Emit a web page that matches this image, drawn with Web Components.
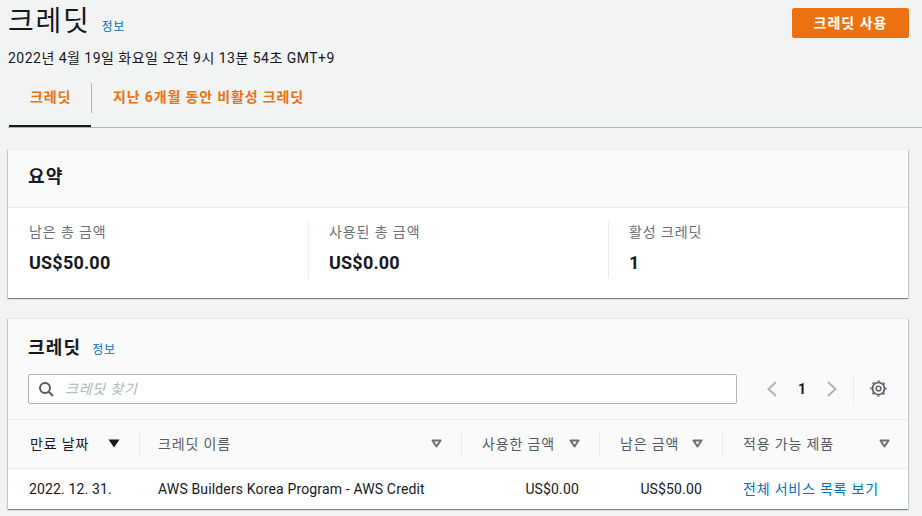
<!DOCTYPE html>
<html lang="ko">
<head>
<meta charset="utf-8">
<title>크레딧</title>
<style>
  html, body { margin: 0; height: 516px; overflow: hidden; }
  body {
    background: #f2f3f3;
    color: #16191f;
    font-family: Roboto, "Noto Sans CJK KR", sans-serif;
    font-size: 14px;
  }
</style>
</head>
<body>
<credits-page></credits-page>
<script>
const FONT = 'Roboto, "Noto Sans CJK KR", sans-serif';

class InfoLink extends HTMLElement {
    constructor() {
        super();
        this.attachShadow({ mode: 'open' });
        this.shadowRoot.innerHTML = `
            <style>
                :host { display: inline-block; font-size: 12px; line-height: 16px; color: #0073bb; letter-spacing: .7px; }
            </style>
            <slot></slot>
        `;
    }
}

class PageHeader extends HTMLElement {
    constructor() {
        super();
        this.attachShadow({ mode: 'open' });
        this.shadowRoot.innerHTML = `
            <style>
                :host { display: block; padding: 0 13px 0 8px; }
                .top { display: flex; justify-content: space-between; align-items: flex-start; height: 44px; }
                .title { display: flex; align-items: baseline; gap: 11px; padding-top: 2px; }
                h1 { margin: 0; font-size: 28px; line-height: 40px; font-weight: 400; letter-spacing: 1.7px; }
                button {
                    margin: 8px 0 0;
                    width: 117px;
                    height: 30px;
                    background: #ec7211;
                    border: 1px solid #ec7211;
                    border-radius: 2px;
                    color: #fff;
                    font: 700 14px/20px ${FONT};
                    letter-spacing: 1px;
                    padding: 0;
                }
                .date { margin-top: 4px; font-size: 14px; line-height: 20px; color: #16191f; letter-spacing: .48px; }
            </style>
            <div class="top">
                <div class="title"><h1>크레딧</h1><info-link>정보</info-link></div>
                <button>크레딧 사용</button>
            </div>
            <div class="date">2022년 4월 19일 화요일 오전 9시 13분 54초 GMT+9</div>
        `;
    }
}

class TabBar extends HTMLElement {
    constructor() {
        super();
        this.attachShadow({ mode: 'open' });
        this.shadowRoot.innerHTML = `
            <style>
                :host { display: block; margin: 15px 0 0 8px; border-bottom: 1px solid #aab7b8; height: 44px; }
                .tabs { display: flex; height: 44px; }
                .tab {
                    box-sizing: border-box;
                    height: 44px;
                    padding: 0 21px;
                    color: #ec7211;
                    font-weight: 700;
                    font-size: 14px;
                    line-height: 28px;
                    letter-spacing: .85px;
                    white-space: nowrap;
                }
                .active { border-bottom: 2px solid #16191f; margin-left: 1px; padding: 0 0 0 21px; width: 82px; }
                .next { border-left: 1px solid #aab7b8; height: 30px; }
            </style>
            <div class="tabs">
                <div class="tab active">크레딧</div>
                <div class="tab next">지난 6개월 동안 비활성 크레딧</div>
            </div>
        `;
    }
}

class InfoCard extends HTMLElement {
    constructor() {
        super();
        this.attachShadow({ mode: 'open' });
        this.shadowRoot.innerHTML = `
            <style>
                :host {
                    display: block;
                    margin: 0 14px 0 8px;
                    background: #fff;
                    box-shadow: 0 1px 1px 0 rgba(0,28,36,.3), 1px 1px 1px 0 rgba(0,28,36,.15), -1px 1px 1px 0 rgba(0,28,36,.15);
                    border-top: 1px solid #eaeded;
                }
            </style>
            <slot></slot>
        `;
    }
}

class SummaryPanel extends HTMLElement {
    constructor() {
        super();
        this.attachShadow({ mode: 'open' });
        const items = [
            { label: '남은 총 금액', value: 'US$50.00' },
            { label: '사용된 총 금액', value: 'US$0.00' },
            { label: '활성 크레딧', value: '1' }
        ];
        this.shadowRoot.innerHTML = `
            <style>
                :host { display: block; }
                header {
                    box-sizing: border-box;
                    height: 58px;
                    padding: 16px 20px 0;
                    background: #fafafa;
                    border-bottom: 1px solid #eaeded;
                    font-size: 18px;
                    line-height: 22px;
                    font-weight: 700;
                    letter-spacing: 1.2px;
                }
                .cols { display: grid; grid-template-columns: 300px 300px 1fr; height: 90px; padding-top: 14px; box-sizing: border-box; }
                .col { height: 56px; padding-left: 20px; border-left: 1px solid #eaeded; }
                .col:first-child { border-left: 0; padding-left: 21px; }
                .label { font-size: 14px; line-height: 20px; color: #687078; letter-spacing: .9px; }
                .value { margin-top: 10px; font-size: 18px; line-height: 22px; font-weight: 700; color: #16191f; letter-spacing: .2px; }
            </style>
            <header>요약</header>
            <div class="cols">
                ${items.map(item => `
                    <div class="col">
                        <div class="label">${item.label}</div>
                        <div class="value">${item.value}</div>
                    </div>
                `).join('')}
            </div>
        `;
    }
}

class CreditsTable extends HTMLElement {
    constructor() {
        super();
        this.attachShadow({ mode: 'open' });
        const arrow = `<svg width="11" height="9" viewBox="0 0 11 9"><path d="M1.5 1.5h8L5.5 7.5z" fill="none" stroke="#687078" stroke-width="2" stroke-linejoin="round"/></svg>`;
        const sorted = `<svg width="12" height="9" viewBox="0 0 12 9"><path d="M.5.5h11L6 8.5z" fill="#16191f"/></svg>`;
        const columns = [
            { text: '만료 날짜', icon: sorted },
            { text: '크레딧 이름', icon: arrow },
            { text: '사용한 금액', icon: arrow },
            { text: '남은 금액', icon: arrow },
            { text: '적용 가능 제품', icon: arrow }
        ];
        this.shadowRoot.innerHTML = `
            <style>
                :host { display: block; }
                .head { background: #fafafa; height: 101px; box-sizing: border-box; padding: 17px 20px 0; border-bottom: 1px solid #eaeded; }
                .title { display: flex; align-items: baseline; gap: 11px; }
                h2 { margin: 0; font-size: 18px; line-height: 24px; font-weight: 700; letter-spacing: 1.2px; }
                .tools { display: flex; align-items: center; margin-top: 14px; height: 30px; }
                .search {
                    box-sizing: border-box;
                    width: 709px;
                    height: 30px;
                    display: flex;
                    align-items: center;
                    gap: 11px;
                    padding: 0 0 2px 9px;
                    background: #fff;
                    border: 1px solid #aab7b8;
                    border-radius: 2px;
                    color: #aab7b8;
                    font-style: italic;
                    font-size: 14px;
                    letter-spacing: .8px;
                }
                .search svg { margin-top: 2px; }
                .pager { display: flex; align-items: center; margin-left: 29px; }
                .num { width: 24px; margin: 0 12px; text-align: center; font-weight: 700; font-size: 14px; }
                .sep { width: 1px; height: 30px; background: #eaeded; margin: 0 16px 0 15px; }
                svg { display: block; flex: none; }
                .gear { margin-top: -2px; }
                .cols { display: grid; grid-template-columns: 131px 322px 138px 123px 1fr; }
                .th {
                    height: 49px;
                    box-sizing: border-box;
                    padding: 0 19px 2px 21px;
                    display: flex;
                    align-items: center;
                    justify-content: space-between;
                    background: #fafafa;
                    border-bottom: 1px solid #eaeded;
                    color: #545b64;
                    position: relative;
                    font-size: 14px;
                    letter-spacing: .85px;
                }
                .th:first-child { color: #16191f; padding: 0 19px 2px 22px; }
                .th:nth-child(2) { padding-left: 19px; }
                .th:nth-child(5) { padding-right: 18px; }
                .th:not(:first-child)::before {
                    content: '';
                    position: absolute;
                    left: 0;
                    top: 12px;
                    width: 1px;
                    height: 24px;
                    background: #eaeded;
                }
                .td { height: 40px; box-sizing: border-box; padding: 0 21px; font-size: 14px; line-height: 40px; color: #16191f; white-space: nowrap; letter-spacing: .15px; }
                .td:nth-child(7) { padding-left: 19px; }
                .td.right { text-align: right; padding-right: 20px; }
                .td a { color: #0073bb; text-decoration: none; letter-spacing: .8px; }
            </style>
            <div class="head">
                <div class="title"><h2>크레딧</h2><info-link>정보</info-link></div>
                <div class="tools">
                    <div class="search">
                        <svg width="16" height="16" viewBox="0 0 16 16"><circle cx="7" cy="7" r="5" fill="none" stroke="#545b64" stroke-width="2"/><path d="M10.7 10.7 15 15" stroke="#545b64" stroke-width="2"/></svg>
                        <span>크레딧 찾기</span>
                    </div>
                    <div class="pager">
                        <svg width="12" height="16" viewBox="0 0 12 16"><path d="M10 1 2.5 8l7.5 7" fill="none" stroke="#aab7b8" stroke-width="2"/></svg>
                        <span class="num">1</span>
                        <svg width="12" height="16" viewBox="0 0 12 16"><path d="m2 1 7.5 7L2 15" fill="none" stroke="#aab7b8" stroke-width="2"/></svg>
                    </div>
                    <div class="sep"></div>
                    <svg class="gear" width="17" height="17" viewBox="0 0 17 17" fill="none" stroke="#545b64">
                        <circle cx="8.5" cy="8.5" r="6" stroke-width="1.7"/>
                        <circle cx="8.5" cy="8.5" r="7.5" stroke-width="1.2" stroke-dasharray="2.6 3.29" stroke-dashoffset="1.3"/>
                        <circle cx="8.5" cy="8.5" r="2.4" stroke-width="1.4"/>
                    </svg>
                </div>
            </div>
            <div class="cols">
                ${columns.map(col => `<div class="th"><span>${col.text}</span>${col.icon}</div>`).join('')}
                <div class="td">2022. 12. 31.</div>
                <div class="td">AWS Builders Korea Program - AWS Credit</div>
                <div class="td right">US$0.00</div>
                <div class="td right">US$50.00</div>
                <div class="td"><a href="#">전체 서비스 목록 보기</a></div>
            </div>
        `;
    }
}

class CreditsPage extends HTMLElement {
    constructor() {
        super();
        this.attachShadow({ mode: 'open' });
        this.shadowRoot.innerHTML = `
            <style>
                :host { display: block; }
                .stack { display: flex; flex-direction: column; gap: 20px; margin-top: 21px; }
            </style>
            <page-header></page-header>
            <tab-bar></tab-bar>
            <div class="stack">
                <info-card><summary-panel></summary-panel></info-card>
                <info-card><credits-table></credits-table></info-card>
            </div>
        `;
    }
}

customElements.define('info-link', InfoLink);
customElements.define('page-header', PageHeader);
customElements.define('tab-bar', TabBar);
customElements.define('info-card', InfoCard);
customElements.define('summary-panel', SummaryPanel);
customElements.define('credits-table', CreditsTable);
customElements.define('credits-page', CreditsPage);
</script>
</body>
</html>
